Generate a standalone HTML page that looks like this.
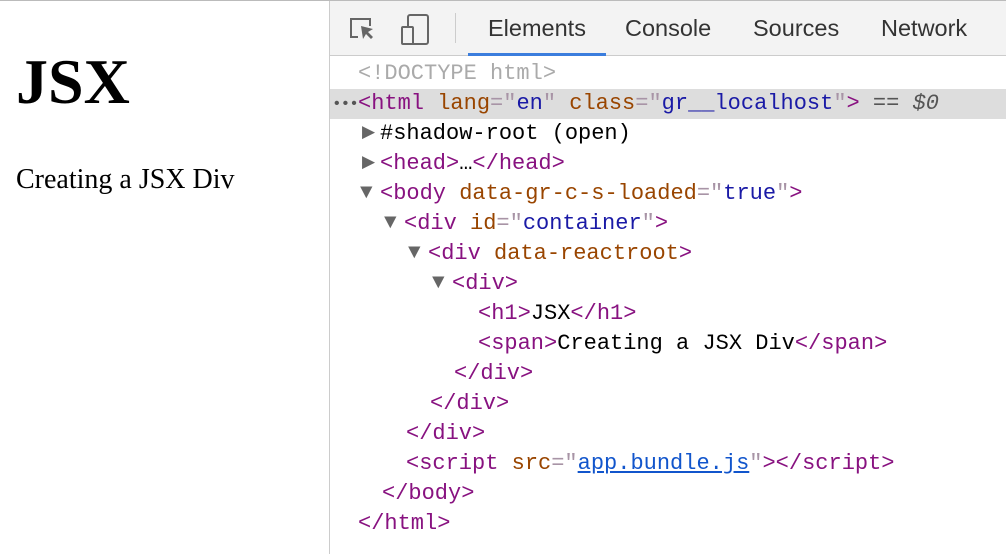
<!DOCTYPE html>
<html><head><style>
html,body{margin:0;width:1006px;height:554px;overflow:hidden}
body{background:#fff;position:relative;border-top:1px solid #bbb;box-sizing:border-box}
.left{position:absolute;left:0;top:0;width:329px;height:554px;border-right:1px solid #ccc}
h1{position:absolute;left:16px;top:44px;margin:0;font:bold 64px "Liberation Serif",serif}
.sp{position:absolute;left:16px;top:163px;font:28px "Liberation Serif",serif}
.dt{position:absolute;left:330px;top:0;right:0;bottom:0}
.tb{height:54px;background:#f3f3f3;border-bottom:1px solid #ccc;position:relative;font:23.5px "Liberation Sans",sans-serif;color:#333}
.tab{position:absolute;top:14px}
.ul{position:absolute;left:138px;top:52px;width:138px;height:3px;background:#3b7ddd}
.code{font:22px/30px "Liberation Mono",monospace;position:absolute;top:58px;left:0;right:0}
.l{height:30px;padding-left:28px;position:relative;white-space:pre}
.sel{background:#ddd}
.t{color:#881280}.a{color:#994500}.v{color:#1a1aa6}.g{color:#aaa}.p{color:#a894a6}
.ar{color:#666;font-size:17px;display:inline-block;width:18px;vertical-align:top}
.d{font-size:21px;margin-left:-2px;width:20px}
</style></head><body>
<div class="left"><h1>JSX</h1><div class="sp">Creating a JSX Div</div></div>
<div class="dt">
<div class="tb">
<svg style="position:absolute;left:18px;top:14px" width="30" height="30" viewBox="0 0 30 30" fill="none" stroke="#666" stroke-width="2"><path d="M10 22H3V4h19v7"/><path d="M13 11l2 13 3-5 5 5 2-2-5-5 5-3z" fill="#666" stroke="none"/></svg>
<svg style="position:absolute;left:70px;top:12px" width="32" height="34" viewBox="0 0 32 34" fill="none" stroke="#666" stroke-width="2"><rect x="8" y="2" width="20" height="29" rx="2"/><rect x="2" y="14" width="11" height="17" rx="1" fill="#f3f3f3"/></svg>
<div style="position:absolute;left:125px;top:12px;width:1px;height:30px;background:#ccc"></div>
<span class="tab" style="left:158px">Elements</span>
<span class="tab" style="left:295px">Console</span>
<span class="tab" style="left:423px">Sources</span>
<span class="tab" style="left:551px">Network</span>
<div class="ul"></div>
</div>
<div class="code">
<div class="l g">&lt;!DOCTYPE html&gt;</div>
<div class="l sel"><span style="position:absolute;left:2px;color:#555;font-size:16px;letter-spacing:-1px">•••</span><span class="t">&lt;html</span> <span class="a">lang</span><span class="p">="</span><span class="v">en</span><span class="p">"</span> <span class="a">class</span><span class="p">="</span><span class="v">gr__localhost</span><span class="p">"</span><span class="t">&gt;</span> <span style="color:#555">== <i>$0</i></span></div>
<div class="l" style="padding-left:32px"><span class="ar">▶</span>#shadow-root (open)</div>
<div class="l" style="padding-left:32px"><span class="ar">▶</span><span class="t">&lt;head&gt;</span>…<span class="t">&lt;/head&gt;</span></div>
<div class="l" style="padding-left:32px"><span class="ar d">▼</span><span class="t">&lt;body</span> <span class="a">data-gr-c-s-loaded</span><span class="p">="</span><span class="v">true</span><span class="p">"</span><span class="t">&gt;</span></div>
<div class="l" style="padding-left:56px"><span class="ar d">▼</span><span class="t">&lt;div</span> <span class="a">id</span><span class="p">="</span><span class="v">container</span><span class="p">"</span><span class="t">&gt;</span></div>
<div class="l" style="padding-left:80px"><span class="ar d">▼</span><span class="t">&lt;div</span> <span class="a">data-reactroot</span><span class="t">&gt;</span></div>
<div class="l" style="padding-left:104px"><span class="ar d">▼</span><span class="t">&lt;div&gt;</span></div>
<div class="l" style="padding-left:148px"><span class="t">&lt;h1&gt;</span>JSX<span class="t">&lt;/h1&gt;</span></div>
<div class="l" style="padding-left:148px"><span class="t">&lt;span&gt;</span>Creating a JSX Div<span class="t">&lt;/span&gt;</span></div>
<div class="l" style="padding-left:124px"><span class="t">&lt;/div&gt;</span></div>
<div class="l" style="padding-left:100px"><span class="t">&lt;/div&gt;</span></div>
<div class="l" style="padding-left:76px"><span class="t">&lt;/div&gt;</span></div>
<div class="l" style="padding-left:76px"><span class="t">&lt;script</span> <span class="a">src</span><span class="p">="</span><span style="color:#1155cc;text-decoration:underline">app.bundle.js</span><span class="p">"</span><span class="t">&gt;&lt;/script&gt;</span></div>
<div class="l" style="padding-left:52px"><span class="t">&lt;/body&gt;</span></div>
<div class="l"><span class="t">&lt;/html&gt;</span></div>
</div>
</div>
</body></html>
